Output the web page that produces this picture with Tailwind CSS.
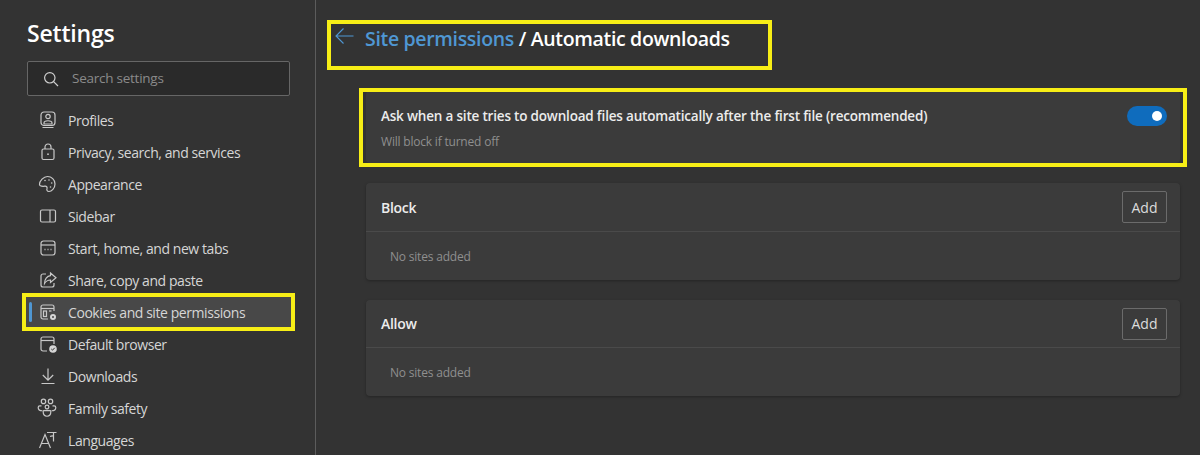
<!DOCTYPE html>
<html lang="en">
 <head>
  <meta charset="UTF-8" />
  <script src="https://cdn.jsdelivr.net/npm/@tailwindcss/browser@4"></script>
  <title>Settings</title>
 </head>
 <body class="h-[455px] w-[1200px] overflow-hidden bg-[#333333] font-['Open_Sans','Noto_Sans',sans-serif] text-[14px] text-[#d6d6d6]">
  <div class="flex h-[455px]">
   <!-- sidebar -->
   <aside class="h-full w-[316px] shrink-0 overflow-hidden border-r border-[#5c5c5c] pl-[27px] pr-[25px]">
    <h1 class="mt-[17px] h-[32px] text-[23px] leading-[32px] font-semibold tracking-[-0.2px] text-white">Settings</h1>
    <div class="mt-[12px] flex h-[35px] items-center rounded-[2px] border border-[#666666] bg-[#2a2a2a] pl-[15px]">
     <svg class="h-[16px] w-[16px] text-[#cfcfcf]" viewBox="0 0 16 16" fill="none" stroke="currentColor" stroke-width="1.2"><circle cx="6.8" cy="6.8" r="5.2" /><path d="M10.6 10.6 15 15" /></svg>
     <span class="ml-[13px] text-[13.5px] tracking-[-0.25px] text-[#8a8a8a]">Search settings</span>
    </div>
    <nav class="mt-[8px] -ml-[5px] flex flex-col">
     <a class="flex h-[32px] items-center pl-[17px] tracking-[-0.43px]">
      <svg class="mr-[11px] h-[18px] w-[18px]" viewBox="0 0 18 18" fill="none" stroke="#c8c8c8" stroke-width="1.2"><rect x="2" y="1" width="14" height="13.500" rx="3" /><circle cx="9" cy="5.500" r="2.200" /><path d="M5 12c0-3 8-3 8 0v1H5ZM3.500 16.500h11" /></svg>
      Profiles
     </a>
     <a class="flex h-[32px] items-center pl-[17px] tracking-[-0.43px]">
      <svg class="mr-[11px] h-[18px] w-[18px]" viewBox="0 0 18 18" fill="none" stroke="#c8c8c8" stroke-width="1.2"><rect x="3" y="6" width="12" height="10.5" rx="1.5" /><path d="M6 6V4a3 3 0 0 1 6 0v2" /><circle cx="9" cy="11.2" r=".9" fill="#c8c8c8" stroke="none" /></svg>
      Privacy, search, and services
     </a>
     <a class="flex h-[32px] items-center pl-[17px] tracking-[-0.43px]">
      <svg class="mr-[11px] h-[18px] w-[18px] -translate-x-[1px]" viewBox="0 0 18 18" fill="none" stroke="#c8c8c8" stroke-width="1.2"><path d="M9.5 1.5c4 0 7.5 3 7.5 7.5s-3.500 7.500-6 7.500c-2 0-2.500-1.500-2-3 .4-1.400-.6-2.500-2-2.300-2 .3-5.500.3-5.500-1.700 0-3.500 4-8 8-8Z" /><circle cx="7" cy="5.500" r=".8" fill="#c8c8c8" stroke="none" /><circle cx="11" cy="5" r=".8" fill="#c8c8c8" stroke="none" /><circle cx="13.700" cy="8" r=".8" fill="#c8c8c8" stroke="none" /><circle cx="12.500" cy="12" r=".8" fill="#c8c8c8" stroke="none" /></svg>
      Appearance
     </a>
     <a class="flex h-[32px] items-center pl-[17px] tracking-[-0.43px]">
      <svg class="mr-[11px] h-[18px] w-[18px]" viewBox="0 0 18 18" fill="none" stroke="#c8c8c8" stroke-width="1.2"><rect x="1.500" y="3" width="15" height="12" rx="1.500" /><path d="M11 3v12" /></svg>
      Sidebar
     </a>
     <a class="flex h-[32px] items-center pl-[17px] tracking-[-0.43px]">
      <svg class="mr-[11px] h-[18px] w-[18px]" viewBox="0 0 18 18" fill="none" stroke="#c8c8c8" stroke-width="1.2"><rect x="2" y="2" width="14" height="14" rx="2.500" /><path d="M2 6h14" /><path d="M5.500 10.500h1M8.500 10.500h1M11.500 10.500h1" stroke-width="1.500" /></svg>
      Start, home, and new tabs
     </a>
     <a class="flex h-[32px] items-center pl-[17px] tracking-[-0.43px]">
      <svg class="mr-[11px] h-[18px] w-[18px]" viewBox="0 0 18 18" fill="none" stroke="#c8c8c8" stroke-width="1.2"><path d="M7 3H4a2 2 0 0 0-2 2v9a2 2 0 0 0 2 2h9a2 2 0 0 0 2-2v-2" /><path d="M11.500 2 17 6.800l-5.500 4.700V9C9 9 7 10 5.500 12.500 5.500 8.500 8 5 11.500 4.700Z" /></svg>
      Share, copy and paste
     </a>
     <div class="relative">
      <div class="absolute -top-[3px] -right-[5px] -bottom-[3px] left-0 border-[4px] border-[#f7ee16] bg-[#484848]"></div>
      <span class="absolute top-[6px] left-[7px] h-[20px] w-[3px] rounded-[2px] bg-[#4f97d3]"></span>
      <a class="relative flex h-[32px] items-center pl-[17px] tracking-[-0.43px]">
       <svg class="mr-[11px] h-[18px] w-[18px]" viewBox="0 0 18 18" fill="none" stroke="#c8c8c8" stroke-width="1.2"><path d="M9 16H4a2 2 0 0 1-2-2V4a2 2 0 0 1 2-2h9a2 2 0 0 1 2 2v4" /><path d="M2 5.500h13" /><rect x="4.500" y="8" width="3" height="5.500" /><path d="M10 8h2.500" /><circle cx="14" cy="14" r="3" fill="#d6d6d6" stroke="none" /><circle cx="14" cy="14" r="1" fill="#484848" stroke="none" /></svg>
       Cookies and site permissions
      </a>
     </div>
     <a class="flex h-[32px] items-center pl-[17px] tracking-[-0.43px]">
      <svg class="mr-[11px] h-[18px] w-[18px]" viewBox="0 0 18 18" fill="none" stroke="#c8c8c8" stroke-width="1.2"><path d="M8 16H4a2 2 0 0 1-2-2V4a2 2 0 0 1 2-2h9a2 2 0 0 1 2 2v5" /><path d="M2 5.500h13" /><circle cx="14" cy="14" r="3.800" fill="#d6d6d6" stroke="none" /><path d="m12.300 14 1.200 1.200 2.200-2.400" stroke="#333333" stroke-width="1" /></svg>
      Default browser
     </a>
     <a class="flex h-[32px] items-center pl-[17px] tracking-[-0.43px]">
      <svg class="mr-[11px] h-[18px] w-[18px]" viewBox="0 0 18 18" fill="none" stroke="#c8c8c8" stroke-width="1.2"><path d="M9 1.500v11.500M3.800 8l5.200 5.200L14.200 8M2.500 16.500h13" /></svg>
      Downloads
     </a>
     <a class="flex h-[32px] items-center pl-[17px] tracking-[-0.43px]">
      <svg class="mr-[11px] h-[18px] w-[18px] -translate-x-[1px] scale-110" viewBox="0 0 18 18" fill="none" stroke="#c8c8c8" stroke-width="1.100"><circle cx="5.800" cy="3" r="2" /><circle cx="12.200" cy="3" r="2" /><circle cx="9" cy="8" r="1.700" /><path d="M4 7H2.500A1.500 1.500 0 0 0 1 8.500c0 2 1.500 3 3.800 3M14 7h1.500A1.500 1.500 0 0 1 17 8.500c0 2-1.500 3-3.800 3" /><path d="M5.500 12c0 3 1.500 4.500 3.500 4.500s3.500-1.500 3.500-4.500c0-1-7-1-7 0Z" /></svg>
      Family safety
     </a>
     <a class="flex h-[32px] items-center pl-[17px] tracking-[-0.43px]">
      <svg class="mr-[11px] h-[18px] w-[18px]" viewBox="0 0 18 18" fill="none" stroke="#c8c8c8" stroke-width="1.2"><path d="M.5 17 6 3.500 11.500 17M2.500 12.500h7" /><path d="M8 1.500h9.500M14.500 1.500v9M11 5.500c1.500-.7 3-.7 3.500 0" /></svg>
      Languages
     </a>
    </nav>
   </aside>

   <!-- main -->
   <main class="min-w-0 flex-1 pr-[20px] pl-[50px]">
    <div class="relative mt-[24px] flex h-[28px] items-center">
     <div class="absolute -top-[4px] -bottom-[18px] -left-[39px] w-[445px] border-[4px] border-[#f7ee16]"></div>
     <svg class="-ml-[31px] h-[18px] w-[19px] -translate-y-[2px]" viewBox="0 0 19 18" fill="none" stroke="#4f97d3" stroke-width="1.100"><path d="M18.500 9H1M8.500 1.500 1 9l7.500 7.500" /></svg>
     <h2 class="ml-[11px] translate-y-[1px] text-[19.500px] font-semibold tracking-[-0.33px] text-white"><span class="text-[#4f97d3]">Site permissions</span> / Automatic downloads</h2>
    </div>

    <section class="relative mt-[39px] h-[72px] rounded-[4px] bg-[#3b3b3b] pt-[15px] pr-[13px] pl-[15px]">
     <div class="absolute -inset-x-[7px] -top-[3px] -bottom-[4px] border-[4px] border-[#f7ee16]"></div>
     <div class="flex items-start justify-between">
      <p class="text-[13.500px] leading-[20px] font-semibold tracking-[-0.19px] text-[#ececec]">Ask when a site tries to download files automatically after the first file (recommended)</p>
      <div class="flex h-[20px] w-[40px] items-center justify-end rounded-full bg-[#0f6cbd] pr-[5px]"><span class="h-[10px] w-[10px] rounded-full bg-white"></span></div>
     </div>
     <p class="mt-[8px] text-[12px] leading-[16px] tracking-[-0.2px] text-[#8f8f8f]">Will block if turned off</p>
    </section>

    <section class="mt-[20px] h-[97px] rounded-[4px] bg-[#3b3b3b] shadow-[0_1px_3px_rgba(0,0,0,0.3)]">
     <div class="flex h-[49px] items-center justify-between border-b border-[#4a4a4a] pr-[13px] pl-[15px]">
      <h3 class="text-[14px] font-semibold tracking-[-0.3px] text-[#ececec]">Block</h3>
      <button class="h-[32px] w-[45px] rounded-[2px] border border-[#6b6b6b] text-[14px] text-[#dcdcdc]">Add</button>
     </div>
     <p class="pt-[16px] pl-[24px] text-[12px] leading-[18px] tracking-[-0.2px] text-[#8f8f8f]">No sites added</p>
    </section>

    <section class="mt-[20px] h-[96px] rounded-[4px] bg-[#3b3b3b] shadow-[0_1px_3px_rgba(0,0,0,0.3)]">
     <div class="flex h-[48px] items-center justify-between border-b border-[#4a4a4a] pr-[13px] pl-[15px]">
      <h3 class="text-[14px] font-semibold tracking-[-0.3px] text-[#ececec]">Allow</h3>
      <button class="h-[32px] w-[45px] rounded-[2px] border border-[#6b6b6b] text-[14px] text-[#dcdcdc]">Add</button>
     </div>
     <p class="pt-[16px] pl-[24px] text-[12px] leading-[18px] tracking-[-0.2px] text-[#8f8f8f]">No sites added</p>
    </section>
   </main>
  </div>
 </body>
</html>
